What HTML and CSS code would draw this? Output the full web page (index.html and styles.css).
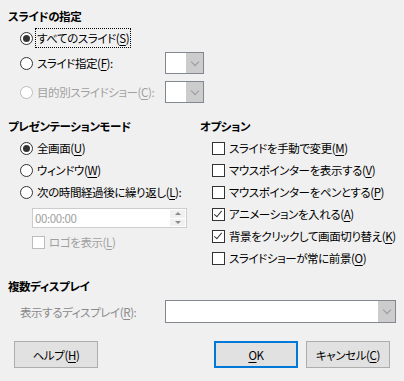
FILE: index.html
```html
<!DOCTYPE html>
<html lang="ja">
<head>
    <meta charset="UTF-8">
    <title>スライドショーの設定</title>
    <link rel="stylesheet" href="styles.css">
</head>
<body>
<div class="dialog">

    <div class="grouptitle">スライドの指定</div>
    <div class="group">
        <div class="optrow">
            <span class="radio checked"></span>
            <span class="optlabel"><span class="focusbox">すべてのスライド(<u>S</u>)</span></span>
        </div>
        <div class="optrow optrow2">
            <span class="radio"></span>
            <span class="optlabel fixlabel">スライド指定(<u>F</u>):</span>
            <div class="combo smallcombo"><div class="combofield"></div><div class="combobtn"><span class="chev"></span></div></div>
        </div>
        <div class="optrow optrow3 disabled">
            <span class="radio"></span>
            <span class="optlabel fixlabel">目的別スライドショー(<u>C</u>):</span>
            <div class="combo smallcombo"><div class="combofield"></div><div class="combobtn"><span class="chev"></span></div></div>
        </div>
    </div>

    <div class="columns">
        <div class="leftcol">
            <div class="grouptitle">プレゼンテーションモード</div>
            <div class="group">
                <div class="optrow"><span class="radio checked"></span><span class="optlabel">全画面(<u>U</u>)</span></div>
                <div class="optrow"><span class="radio"></span><span class="optlabel">ウィンドウ(<u>W</u>)</span></div>
                <div class="optrow"><span class="radio"></span><span class="optlabel">次の時間経過後に繰り返し(<u>L</u>):</span></div>
                <div class="spinbox">
                    <div class="spinfield">00:00:00</div>
                    <div class="spinbtns">
                        <div class="spinbtn"><span class="arrowup"></span></div>
                        <div class="spinbtn"><span class="arrowdown"></span></div>
                    </div>
                </div>
                <div class="optrow disabled logorow"><span class="check"></span><span class="optlabel">ロゴを表示(<u>L</u>)</span></div>
            </div>
        </div>
        <div class="rightcol">
            <div class="grouptitle">オプション</div>
            <div class="group">
                <div class="optrow"><span class="check"></span><span class="optlabel">スライドを手動で変更(<u>M</u>)</span></div>
                <div class="optrow"><span class="check"></span><span class="optlabel">マウスポインターを表示する(<u>V</u>)</span></div>
                <div class="optrow"><span class="check"></span><span class="optlabel">マウスポインターをペンとする(<u>P</u>)</span></div>
                <div class="optrow"><span class="check checked"></span><span class="optlabel">アニメーションを入れる(<u>A</u>)</span></div>
                <div class="optrow"><span class="check checked"></span><span class="optlabel">背景をクリックして画面切り替え(<u>K</u>)</span></div>
                <div class="optrow"><span class="check"></span><span class="optlabel">スライドショーが常に前景(<u>O</u>)</span></div>
            </div>
        </div>
    </div>

    <div class="grouptitle displaytitle">複数ディスプレイ</div>
    <div class="group displayrow">
        <span class="displaylabel">表示するディスプレイ(<u>R</u>):</span>
        <div class="combo widecombo"><div class="combofield"></div><div class="combobtn"><span class="chev"></span></div></div>
    </div>

    <div class="btnrow">
        <div class="btn">ヘルプ(<u>H</u>)</div>
        <div class="btnspacer"></div>
        <div class="btn btndefault"><u>O</u>K</div>
        <div class="btn">キャンセル(<u>C</u>)</div>
    </div>

</div>
</body>
</html>
```

FILE: styles.css
```css
html, body{
    margin: 0;
    padding: 0;
    background: #f0f0f0;
}

.dialog{
    width: 404px;
    height: 381px;
    box-sizing: border-box;
    padding: 8px 14px 0 8px;
    font-family: "Noto Sans CJK JP", "Liberation Sans", sans-serif;
    font-size: 11.5px;
    font-feature-settings: "palt";
    letter-spacing: -0.4px;
    color: #000;
    overflow: hidden;
}

u{
    text-decoration: underline;
    text-underline-offset: 2px;
}

.grouptitle{
    height: 16px;
    line-height: 16px;
    font-weight: bold;
    white-space: nowrap;
}

.group{
    padding-left: 12px;
    margin-top: 3px;
}

.optrow{
    display: flex;
    align-items: center;
    height: 22px;
    white-space: nowrap;
}

.optrow2{
    margin-top: 3px;
}

.optrow3{
    margin-top: 7px;
}

.optlabel{
    margin-left: 4px;
    line-height: 16px;
}

.fixlabel{
    width: 128px;
    flex: none;
}

.focusbox{
    border: 1px dotted #000;
    padding: 1px;
    margin-left: -2px;
}

.disabled{
    color: #a0a0a0;
}

.radio{
    width: 13px;
    height: 13px;
    box-sizing: border-box;
    border: 1px solid #333;
    border-radius: 50%;
    background: #fff;
    flex: none;
    display: flex;
    align-items: center;
    justify-content: center;
}

.radio.checked::after{
    content: "";
    width: 7px;
    height: 7px;
    border-radius: 50%;
    background: #333;
}

.disabled .radio, .disabled .check{
    border-color: #bcbcbc;
}

.check{
    width: 13px;
    height: 13px;
    box-sizing: border-box;
    border: 1px solid #333;
    background: #fff;
    flex: none;
    position: relative;
}

.check.checked::after{
    content: "";
    position: absolute;
    left: 3px;
    top: 0px;
    width: 3px;
    height: 7px;
    border-right: 1px solid #333;
    border-bottom: 1px solid #333;
    transform: rotate(40deg);
}

.combo{
    display: flex;
    flex: none;
    height: 22px;
    box-sizing: border-box;
    border: 1px solid #828790;
    background: #fff;
}

.smallcombo{
    width: 39px;
}

.widecombo{
    width: 231px;
    height: 23px;
}

.combofield{
    flex: 1;
}

.combobtn{
    width: 17px;
    background: #cccccc;
    display: flex;
    align-items: center;
    justify-content: center;
}

.chev{
    width: 5px;
    height: 5px;
    border-right: 1px solid #9a9a9a;
    border-bottom: 1px solid #9a9a9a;
    transform: rotate(45deg);
    margin-top: -3px;
}

.columns{
    display: flex;
    margin-top: 15px;
}

.leftcol{
    width: 192px;
    flex: none;
}

.rightcol{
    flex: 1;
    min-width: 0;
}

.spinbox{
    display: flex;
    width: 155px;
    height: 20px;
    box-sizing: border-box;
    border: 1px solid #cccccc;
    background: #fff;
    margin-top: 5px;
    margin-left: 12px;
}

.spinfield{
    flex: 1;
    line-height: 18px;
    padding-left: 2px;
    color: #a0a0a0;
}

.spinbtns{
    width: 15px;
    display: flex;
    flex-direction: column;
    gap: 1px;
    padding: 1px 1px 1px 0;
}

.spinbtn{
    flex: 1;
    background: #f0f0f0;
    display: flex;
    align-items: center;
    justify-content: center;
}

.arrowup{
    border-left: 3px solid transparent;
    border-right: 3px solid transparent;
    border-bottom: 3px solid #8a8a8a;
}

.arrowdown{
    border-left: 3px solid transparent;
    border-right: 3px solid transparent;
    border-top: 3px solid #8a8a8a;
}

.logorow{
    margin-top: 3px;
    margin-left: 12px;
}

.displaytitle{
    margin-top: 9px;
}

.displayrow{
    display: flex;
    align-items: center;
    margin-top: 6px;
}

.displaylabel{
    width: 145px;
    flex: none;
    color: #8a8a8a;
    white-space: nowrap;
}

.btnrow{
    display: flex;
    gap: 8px;
    margin-top: 18px;
    padding-left: 6px;
}

.btnspacer{
    flex: 1;
}

.btn{
    width: 84px;
    height: 27px;
    flex: none;
    box-sizing: border-box;
    border: 1px solid #adadad;
    background: #e1e1e1;
    display: flex;
    align-items: center;
    justify-content: center;
    white-space: nowrap;
}

.btndefault{
    border: 2px solid #0078d7;
}
```
